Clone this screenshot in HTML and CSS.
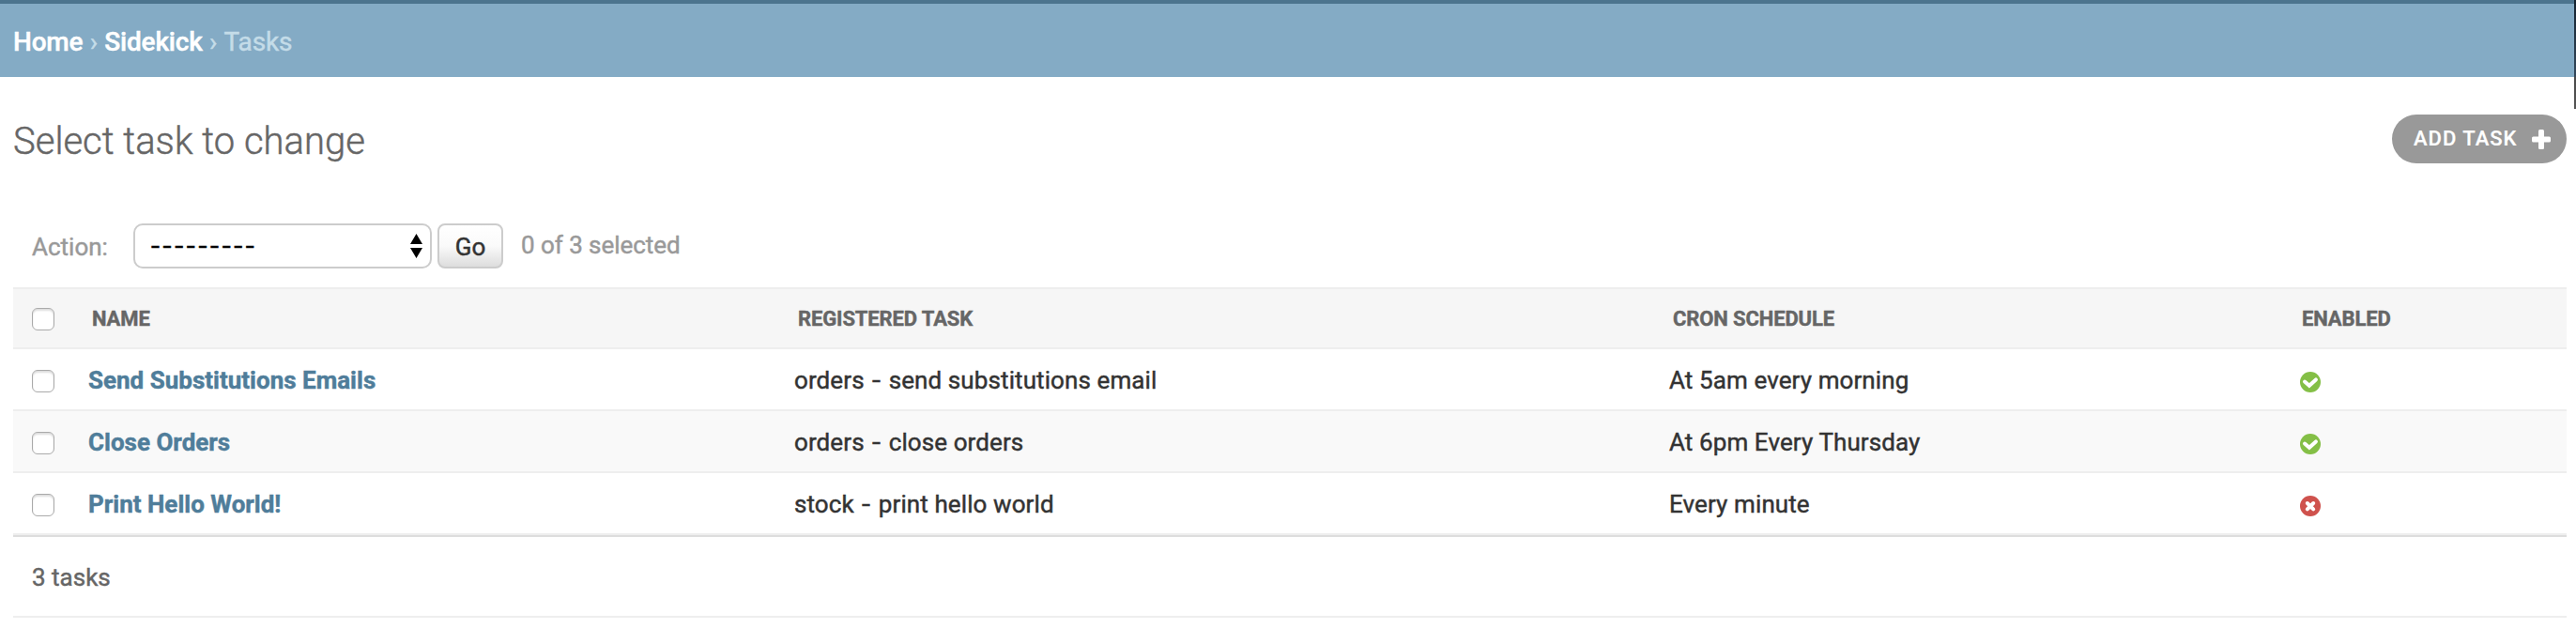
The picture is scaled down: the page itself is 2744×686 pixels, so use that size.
FILE: index.html
```
<!DOCTYPE html>
<html lang="en">
<head>
<meta charset="utf-8">
<title>Select task to change</title>
<link rel="stylesheet" href="styles.css">
</head>
<body>
<header class="breadcrumbs">
  <a>Home</a><span class="sep">›</span><a>Sidekick</a><span class="sep">›</span><span>Tasks</span>
</header>
<div class="window-edge"></div>
<main class="content">
  <div class="title-row">
    <h1>Select task to change</h1>
    <a class="add-button">ADD TASK<svg class="plus" viewBox="0 0 20 21"><rect x="7" width="6" height="21" rx="1.5"/><rect y="7.5" width="20" height="6" rx="1.5"/></svg></a>
  </div>
  <div class="actions">
    <label>Action:</label>
    <div class="select"><span class="placeholder">---------</span><svg class="arrows" viewBox="0 0 13 26"><path d="M6.5 0L13 11H0zM6.5 26L0 15h13z"/></svg></div>
    <button class="go">Go</button>
    <span class="counter">0 of 3 selected</span>
  </div>
  <div class="table">
    <div class="row head"><i class="check"></i><b>NAME</b><b>REGISTERED TASK</b><b>CRON SCHEDULE</b><b>ENABLED</b></div>
    <div class="row"><i class="check"></i><a>Send Substitutions Emails</a><span>orders <span class="dash">-</span> send substitutions email</span><span>At 5am every morning</span><svg class="status yes" viewBox="0 0 22 22"><circle cx="11" cy="11" r="11"/><path d="M5 10.5l4.9 4.3 7-6.4"/></svg></div>
    <div class="row alt"><i class="check"></i><a>Close Orders</a><span>orders <span class="dash">-</span> close orders</span><span>At 6pm Every Thursday</span><svg class="status yes" viewBox="0 0 22 22"><circle cx="11" cy="11" r="11"/><path d="M5 10.5l4.9 4.3 7-6.4"/></svg></div>
    <div class="row"><i class="check"></i><a>Print Hello World!</a><span>stock <span class="dash">-</span> print hello world</span><span>Every minute</span><svg class="status no" viewBox="0 0 22 22"><circle cx="11" cy="11" r="11"/><path d="M7.8 8l6.4 6.4M14.2 8l-6.4 6.4"/></svg></div>
  </div>
  <footer class="paginator">3 tasks</footer>
</main>
</body>
</html>
```
FILE: styles.css
```
* { box-sizing: border-box; }
body {
  margin: 0;
  background: #fff;
  color: #333;
  font: 26px/30px Roboto, "Liberation Sans", sans-serif;
  -webkit-text-stroke: 0.45px;
}
.breadcrumbs {
  display: flex;
  align-items: center;
  height: 82px;
  padding: 3px 14px 0;
  border-top: 4px solid #4c748e;
  background: #84abc5;
  color: #c4dce8;
  font-size: 28px;
  letter-spacing: -0.15px;
}
.breadcrumbs a { color: #fff; font-weight: 500; letter-spacing: -0.2px; }
.sep { width: 23px; text-align: center; }
.window-edge {
  position: absolute;
  top: 0;
  right: 0;
  width: 2px;
  height: 116px;
  background: linear-gradient(#14222f, #33475a 70%, #4a4a4a 71%, #555);
}
.content { padding: 40px 10px 0 14px; }
.title-row { display: flex; justify-content: space-between; height: 52px; }
h1 {
  margin: 5px 0 0;
  color: #666;
  font-size: 40px;
  line-height: 48px;
  font-weight: 300;
}
.add-button {
  display: flex;
  align-items: center;
  justify-content: space-between;
  width: 186px;
  height: 52px;
  padding: 0 17px 0 23px;
  border-radius: 26px;
  background: #999;
  color: #fff;
  font-size: 22px;
  font-weight: 500;
  letter-spacing: 1px;
  -webkit-text-stroke: 0.2px;
}
.plus { width: 20px; height: 21px; fill: #fff; }
.actions {
  display: flex;
  align-items: center;
  height: 48px;
  margin: 64px 0 20px;
  padding-left: 20px;
  color: #999;
}
.actions label { width: 108px; padding-top: 2px; }
.select {
  display: flex;
  align-items: center;
  justify-content: space-between;
  width: 318px;
  height: 48px;
  padding: 0 8px 0 17px;
  border: 2px solid #ccc;
  border-radius: 10px;
  background: #fff;
  color: #000;
}
.placeholder {
  letter-spacing: 2.9px;
  transform: scaleX(1.25);
  transform-origin: left;
}
.arrows { width: 13px; height: 26px; }
.go {
  width: 70px;
  height: 48px;
  margin: 0 19px 0 6px;
  padding: 2px 0 0;
  border: 2px solid #ccc;
  border-radius: 8px;
  background: linear-gradient(#fff, #fafafa 50%, #ddd);
  color: #333;
  font: inherit;
  -webkit-text-stroke: inherit;
}
.counter { padding-bottom: 2px; letter-spacing: -0.05px; }
.row {
  display: grid;
  grid-template-columns: 80px 752px 932px 671px 1fr;
  align-items: center;
  width: 2720px;
  height: 66px;
  padding-top: 2px;
  border-bottom: 2px solid #eee;
  letter-spacing: 0.1px;
}
.head {
  border-top: 2px solid #eee;
  background: #f6f6f6;
  color: #666;
  font-size: 22px;
  letter-spacing: -0.12px;
}
.head b { padding-left: 4px; }
.head b:last-child { padding-left: 3px; }
.row a { color: #4f7d9a; font-weight: 700; letter-spacing: 0; }
.alt { background: #f9f9f9; }
.dash {
  display: inline-block;
  margin: 0 2.8px;
  transform: scaleX(1.25);
}
.check {
  width: 24px;
  height: 24px;
  margin-left: 20px;
  border: 1px solid #aaa;
  border-radius: 6px;
  background: #fff;
  box-shadow: inset 0 2px 2px #ddd;
}
.row:not(.head) .check { margin-top: 2px; }
.status { width: 22px; height: 22px; margin: 4px 0 0 1px; }
.status path { fill: none; stroke: #fff; stroke-width: 4; stroke-linecap: round; }
.yes { fill: #84bf46; }
.no { fill: #cf524d; }
.paginator {
  display: flex;
  align-items: center;
  width: 2720px;
  height: 88px;
  padding: 2px 0 0 20px;
  border-top: 2px solid #ddd;
  border-bottom: 2px solid #eee;
  color: #666;
}
```
